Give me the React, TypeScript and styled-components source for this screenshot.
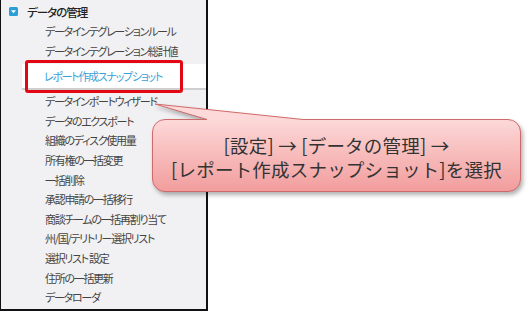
import styled, { createGlobalStyle } from 'styled-components';

const GlobalStyle = createGlobalStyle`
    html, body {
        margin: 0;
        padding: 0;
        background: #ffffff;
    }
    body {
        font-family: "Noto Sans CJK JP", "Noto Sans", sans-serif;
    }
`;

const items = [
    'データインテグレーションルール',
    'データインテグレーション総計値',
];

const itemsAfter = [
    'データインポートウィザード',
    'データのエクスポート',
    '組織のディスク使用量',
    '所有権の一括変更',
    '一括削除',
    '承認申請の一括移行',
    '商談チームの一括再割り当て',
    '州/国/テリトリー選択リスト',
    '選択リスト 設定',
    '住所の一括更新',
    'データローダ',
];

const App = () => {
    return (
        <Stage>
            <GlobalStyle />
            <Panel>
                <Header>
                    <ToggleIcon viewBox="0 0 9 9">
                        <rect x="0" y="0" width="9" height="9" rx="1.5" fill="#2a9ed6" />
                        <path d="M2 3.2 H7 L4.5 6.2 Z" fill="#ffffff" />
                    </ToggleIcon>
                    <HeaderText>データの管理</HeaderText>
                </Header>
                {items.map((label) => (
                    <Item key={label}>{label}</Item>
                ))}
                <SelectedItem>レポート作成スナップショット</SelectedItem>
                {itemsAfter.map((label) => (
                    <Item key={label}>{label}</Item>
                ))}
            </Panel>

            <RedFrame />

            <Bubble>
                <BubbleShape viewBox="-4 -18 378 96" width="378" height="96">
                    <defs>
                        <linearGradient id="bubbleFill" x1="0" y1="0" x2="0" y2="73" gradientUnits="userSpaceOnUse">
                            <stop offset="0" stopColor="#fdd9d9" />
                            <stop offset="1" stopColor="#f29c9c" />
                        </linearGradient>
                    </defs>
                    <path
                        d="M13 0.5 H55 L3 -15 L151 0.5 H356 A12.5 12.5 0 0 1 368.5 13 V60 A12.5 12.5 0 0 1 356 72.5 H13 A12.5 12.5 0 0 1 0.5 60 V13 A12.5 12.5 0 0 1 13 0.5 Z"
                        fill="url(#bubbleFill)"
                        stroke="#cf6a6a"
                        strokeWidth="1"
                    />
                </BubbleShape>
                <BubbleLine>[設定] → [データの管理] →</BubbleLine>
                <BubbleLine>[レポート作成スナップショット]を選択</BubbleLine>
            </Bubble>
        </Stage>
    );
};

const Stage = styled.div`
    position: relative;
    width: 528px;
    height: 311px;
    overflow: hidden;
    background: #ffffff;
`;

const Panel = styled.div`
    box-sizing: border-box;
    width: 208px;
    height: 311px;
    padding-top: 1px;
    background: #f1f1f3;
    border-left: 1px solid #111;
    border-right: 2px solid #111;
    border-bottom: 2px solid #111;
    display: flex;
    flex-direction: column;
    font-feature-settings: "palt";
`;

const Header = styled.div`
    height: 21px;
    display: flex;
    align-items: center;
    padding-left: 8px;
    gap: 9px;
`;

const ToggleIcon = styled.svg`
    width: 9px;
    height: 9px;
    flex: none;
`;

const HeaderText = styled.span`
    font-size: 11.5px;
    font-weight: 500;
    color: #222;
    letter-spacing: -1px;
`;

const Item = styled.div`
    height: 19.6px;
    line-height: 19.6px;
    padding-left: 44px;
    font-size: 11px;
    color: #444;
    white-space: nowrap;
    letter-spacing: -1.3px;
`;

const SelectedItem = styled(Item)`
    height: 24px;
    line-height: 24px;
    margin: 3px 0 2px 21px;
    padding-left: 22px;
    background: #ffffff;
    border-bottom: 2px solid #cfcfd2;
    color: #3a9fd6;
`;

const RedFrame = styled.div`
    position: absolute;
    left: 25px;
    top: 60px;
    width: 158px;
    height: 33px;
    box-sizing: border-box;
    border: 3px solid #e30613;
    border-radius: 3px;
`;

const Bubble = styled.div`
    position: absolute;
    left: 152px;
    top: 119px;
    width: 369px;
    height: 73px;
    box-sizing: border-box;
    padding-top: 3px;
    display: flex;
    flex-direction: column;
    align-items: center;
    justify-content: center;
`;

const BubbleShape = styled.svg`
    position: absolute;
    left: -4px;
    top: -18px;
    overflow: visible;
    filter: drop-shadow(2px 3px 2px rgba(0, 0, 0, 0.3));
`;

const BubbleLine = styled.div`
    position: relative;
    font-size: 18.5px;
    line-height: 24px;
    color: #333;
    white-space: nowrap;
    letter-spacing: 0.2px;
`;

export default App;
